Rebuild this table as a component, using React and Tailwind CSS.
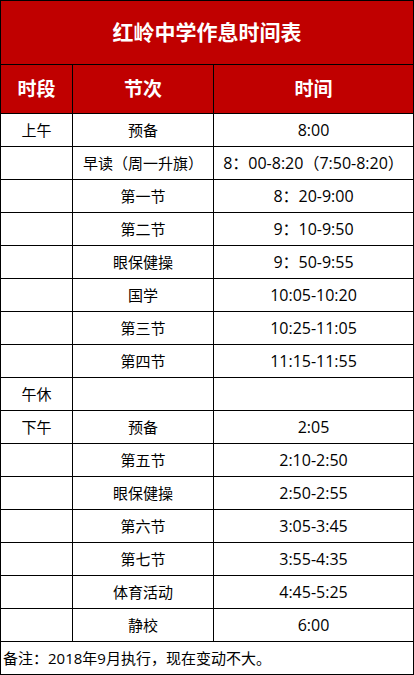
import React from 'react';

const rows = [
  ['上午', '预备', '8:00'],
  ['', '早读（周一升旗）', '8：00-8:20（7:50-8:20）'],
  ['', '第一节', '8：20-9:00'],
  ['', '第二节', '9：10-9:50'],
  ['', '眼保健操', '9：50-9:55'],
  ['', '国学', '10:05-10:20'],
  ['', '第三节', '10:25-11:05'],
  ['', '第四节', '11:15-11:55'],
  ['午休', '', ''],
  ['下午', '预备', '2:05'],
  ['', '第五节', '2:10-2:50'],
  ['', '眼保健操', '2:50-2:55'],
  ['', '第六节', '3:05-3:45'],
  ['', '第七节', '3:55-4:35'],
  ['', '体育活动', '4:45-5:25'],
  ['', '静校', '6:00'],
];

export default function App() {
  return (
    <div
      className="w-[414px] h-[675px] bg-white border border-black text-black"
      style={{ fontFamily: '"Open Sans", "Noto Sans CJK SC", sans-serif' }}
    >
      {/* Title */}
      <div className="h-[64px] bg-[#c00000] border-b border-black flex items-center justify-center text-white text-[21px] font-bold">
        红岭中学作息时间表
      </div>

      {/* Column headers */}
      <div className="h-[49px] flex bg-[#c00000] border-b border-black text-white text-[19px] font-bold">
        <div className="w-[72px] border-r border-black flex items-center justify-center">时段</div>
        <div className="w-[141px] border-r border-black flex items-center justify-center">节次</div>
        <div className="w-[199px] flex items-center justify-center">时间</div>
      </div>

      {/* Schedule rows */}
      {rows.map(([period, lesson, time], i) => (
        <div key={i} className="h-[33px] flex border-b border-black text-[15px]">
          <div className="w-[72px] border-r border-black flex items-center justify-center">{period}</div>
          <div className="w-[141px] border-r border-black flex items-center justify-center whitespace-nowrap">{lesson}</div>
          <div className="w-[199px] flex items-center justify-center whitespace-nowrap text-[16px]">{time}</div>
        </div>
      ))}

      {/* Note */}
      <div className="h-[32px] flex items-center pl-[2px] text-[15px]">
        备注：2018年9月执行，现在变动不大。
      </div>
    </div>
  );
}
